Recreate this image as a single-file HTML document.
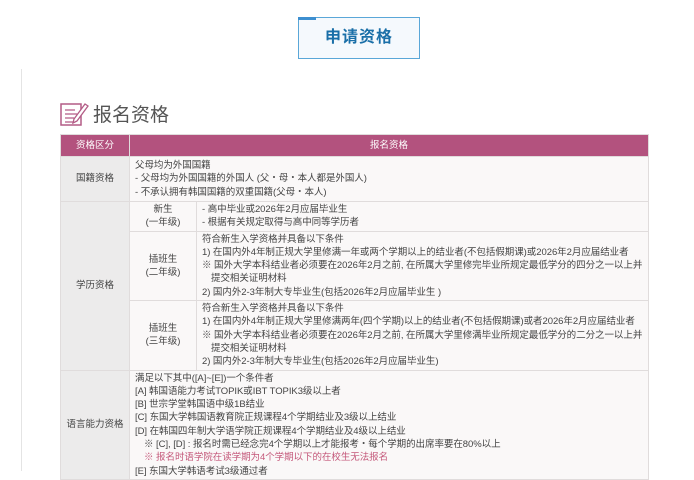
<!DOCTYPE html>
<html><head><meta charset="utf-8"><style>
*{margin:0;padding:0;box-sizing:border-box}
body{width:694px;height:471px;background:#fff;position:relative;overflow:hidden;font-family:"Liberation Sans","Noto Sans CJK SC",sans-serif;color:#444}
.btn{position:absolute;left:298px;top:17px;width:122px;height:42px;border:1px solid #5aa7d8;background:#f5f9fd;color:#1a6fa8;font-weight:bold;font-size:16px;text-align:center;line-height:40px;letter-spacing:1px}
.btn:before{content:"";position:absolute;left:-1px;top:-1px;width:18px;height:3px;background:#3d8fd0}
.vl{position:absolute;left:21px;top:69px;width:1px;height:402px;background:#e4e4e4}
.title{position:absolute;left:93px;top:100px;font-size:19px;color:#555}
table{position:absolute;left:60px;top:134px;width:589px;border-collapse:collapse;font-size:9.5px;line-height:13.3px;table-layout:fixed}
td,th{border:1px solid #e0dcdc;vertical-align:middle;white-space:nowrap;overflow:hidden}
th{background:#b3527e;color:#fff;font-weight:normal;height:22px;font-size:9.5px}
td.c1{background:#ecebeb;text-align:center}
td.c2{background:#faf8f8;text-align:center}
td.c3{background:#faf8f8;padding:1px 2px 1px 5px;letter-spacing:-0.05px}
.ind{padding-left:9px}.r{color:#c4587a}
</style></head><body>
<div class="btn">申请资格</div>
<div class="vl"></div>
<svg style="position:absolute;left:60px;top:101px" width="30" height="25" viewBox="0 0 30 25"><rect x="1" y="3" width="20" height="21" fill="none" stroke="#b35c86" stroke-width="1.5"/><path d="M5 9h10M5 13h12M5 17h9M5 21h8" stroke="#b35c86" stroke-width="1.3"/><path d="M14 18l11-15 3 2-11 15-4 2z" fill="#fff" stroke="#b35c86" stroke-width="1.3"/></svg>
<div class="title">报名资格</div>
<table>
<colgroup><col style="width:69px"><col style="width:67px"><col></colgroup>
<tr><th>资格区分</th><th colspan="2">报名资格</th></tr>
<tr style="height:45px"><td class="c1">国籍资格</td><td class="c3" colspan="2">父母均为外国国籍<br>- 父母均为外国国籍的外国人 (父・母・本人都是外国人)<br>- 不承认拥有韩国国籍的双重国籍(父母・本人)</td></tr>
<tr style="height:28px"><td class="c1" rowspan="3">学历资格</td><td class="c2">新生<br>(一年级)</td><td class="c3">- 高中毕业或2026年2月应届毕业生<br>- 根据有关规定取得与高中同等学历者</td></tr>
<tr style="height:69px"><td class="c2">插班生<br>(二年级)</td><td class="c3">符合新生入学资格并具备以下条件<br>1) 在国内外4年制正规大学里修满一年或两个学期以上的结业者(不包括假期课)或2026年2月应届结业者<br>※ 国外大学本科结业者必须要在2026年2月之前, 在所属大学里修完毕业所规定最低学分的四分之一以上并<br><span class="ind">提交相关证明材料</span><br>2) 国内外2-3年制大专毕业生(包括2026年2月应届毕业生 )</td></tr>
<tr style="height:69px"><td class="c2">插班生<br>(三年级)</td><td class="c3">符合新生入学资格并具备以下条件<br>1) 在国内外4年制正规大学里修满两年(四个学期)以上的结业者(不包括假期课)或者2026年2月应届结业者<br>※ 国外大学本科结业者必须要在2026年2月之前, 在所属大学里修满毕业所规定最低学分的二分之一以上并<br><span class="ind">提交相关证明材料</span><br>2) 国内外2-3年制大专毕业生(包括2026年2月应届毕业生)</td></tr>
<tr><td class="c1">语言能力资格</td><td class="c3" colspan="2">满足以下其中([A]~[E])一个条件者<br>[A] 韩国语能力考试TOPIK或IBT TOPIK3级以上者<br>[B] 世宗学堂韩国语中级1B结业<br>[C] 东国大学韩国语教育院正规课程4个学期结业及3级以上结业<br>[D] 在韩国四年制大学语学院正规课程4个学期结业及4级以上结业<br><span class="ind">※ [C], [D] : 报名时需已经念完4个学期以上才能报考・每个学期的出席率要在80%以上</span><br><span class="ind r">※ 报名时语学院在读学期为4个学期以下的在校生无法报名</span><br>[E] 东国大学韩语考试3级通过者</td></tr>
</table>
</body></html>
